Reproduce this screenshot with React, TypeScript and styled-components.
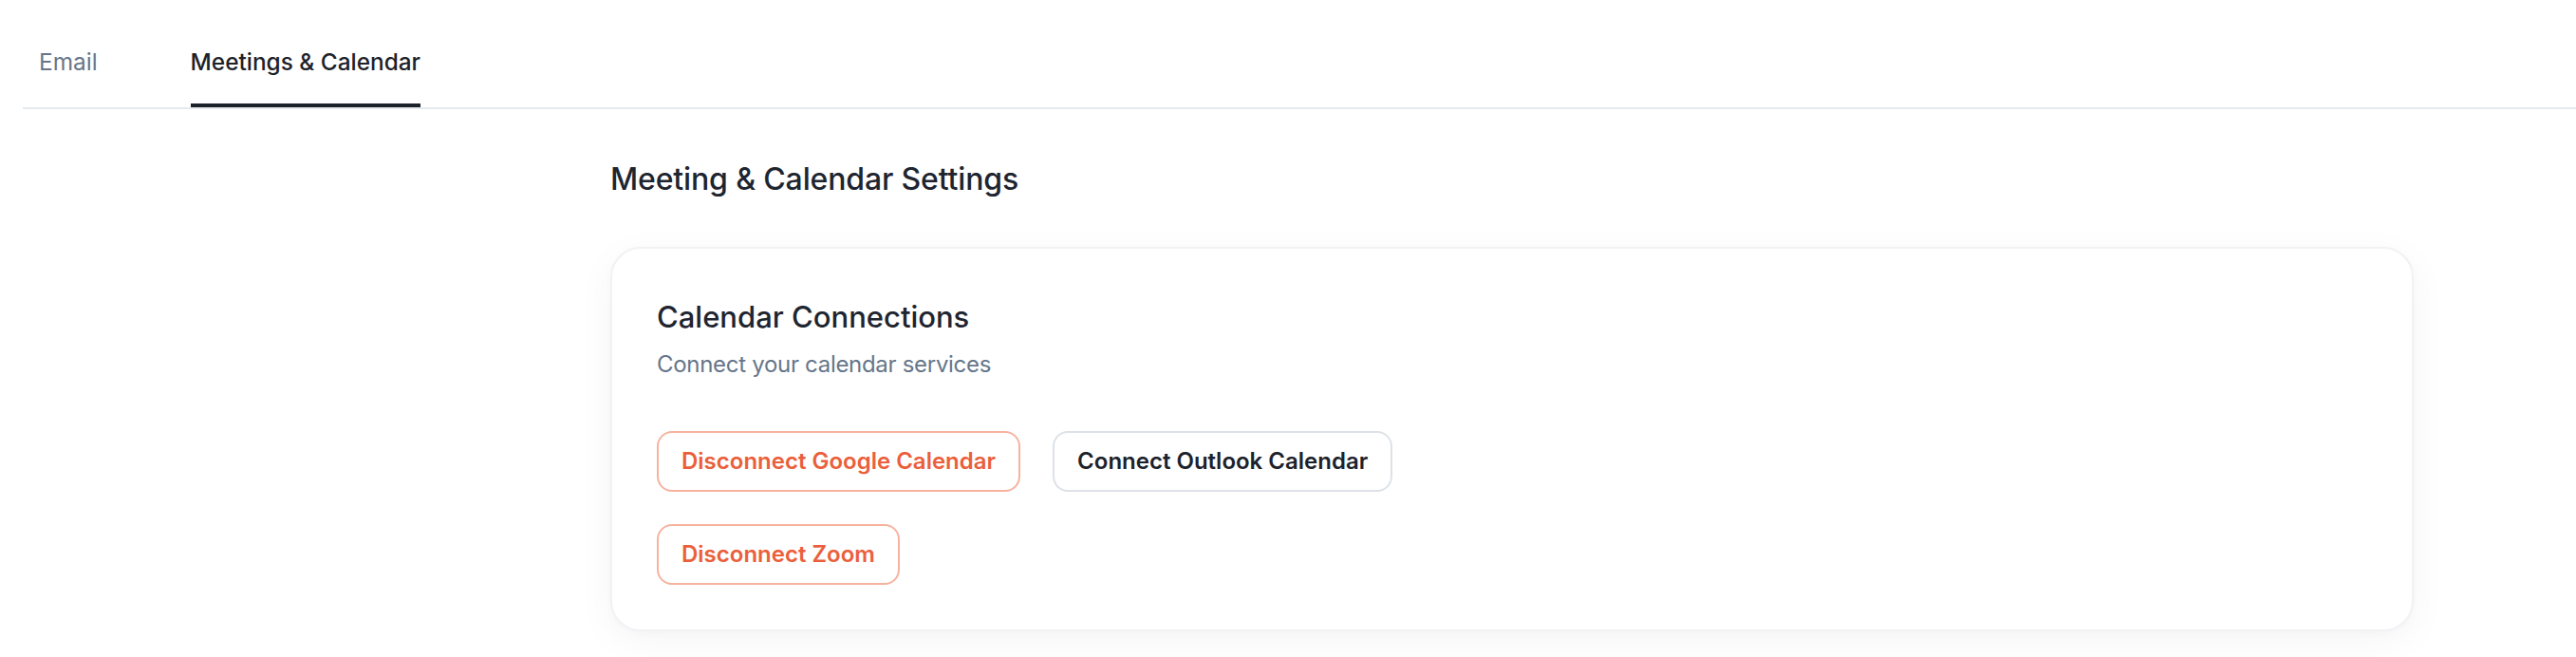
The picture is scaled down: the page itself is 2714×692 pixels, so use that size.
import React from "react";
import styled, { createGlobalStyle } from "styled-components";

const GlobalStyle = createGlobalStyle`
  html, body {
    margin: 0;
    padding: 0;
    background: #ffffff;
  }
  body {
    font-family: Inter, "Noto Sans", Roboto, sans-serif;
    color: #1e2430;
    -webkit-font-smoothing: antialiased;
  }
  * { box-sizing: border-box; }
`;

const Page = styled.div`
  padding: 24px 0 0 0;
  min-height: 692px;
`;

const TabList = styled.div`
  display: flex;
  gap: 98px;
  margin-left: 24px;
  padding-left: 17px;
  border-bottom: 2px solid #e6eaef;
`;

const Tab = styled.button<{ $active?: boolean }>`
  appearance: none;
  background: none;
  border: none;
  border-bottom: 4px solid ${(p) => (p.$active ? "#1d222a" : "transparent")};
  padding: 23px 0 26px;
  margin: 0;
  font-family: inherit;
  font-size: 24.4px;
  line-height: 36px;
  font-weight: ${(p) => (p.$active ? 500 : 400)};
  color: ${(p) => (p.$active ? "#1d222a" : "#68768a")};
  cursor: pointer;
`;

const Content = styled.main`
  margin-left: 643px;
  width: 1900px;
  padding-top: 52px;
`;

const PageTitle = styled.h1`
  margin: 0 0 49px;
  font-size: 32px;
  line-height: 44px;
  font-weight: 500;
  color: #1e2530;
  letter-spacing: -0.15px;
`;

const Card = styled.section`
  background: #ffffff;
  border: 2px solid #f1f2f4;
  border-radius: 32px;
  padding: 52px 47px 47px;
  box-shadow: 0 10px 40px rgba(15, 23, 42, 0.045), 0 2px 8px rgba(15, 23, 42, 0.02);
`;

const CardTitle = styled.h2`
  margin: 0;
  font-size: 31px;
  line-height: 40px;
  font-weight: 500;
  color: #1e2530;
`;

const CardSubtitle = styled.p`
  margin: 11px 0 0;
  font-size: 24px;
  line-height: 38px;
  font-weight: 400;
  letter-spacing: -0.3px;
  color: #66768a;
`;

const ButtonGroup = styled.div`
  display: flex;
  flex-direction: column;
  align-items: flex-start;
  gap: 34px;
  margin-top: 51px;
`;

const ButtonRow = styled.div`
  display: flex;
  gap: 34px;
`;

const ActionButton = styled.button<{ $variant: "danger" | "neutral" }>`
  appearance: none;
  height: 64px;
  padding: 0 24px;
  border-radius: 16px;
  background: #ffffff;
  border: 2px solid ${(p) => (p.$variant === "danger" ? "#f6b3a0" : "#dde2e8")};
  color: ${(p) => (p.$variant === "danger" ? "#ea5f3c" : "#1c222c")};
  font-family: inherit;
  font-size: 24px;
  line-height: 60px;
  font-weight: 600;
  white-space: nowrap;
  cursor: pointer;
`;

export default function App() {
  return (
    <>
      <GlobalStyle />
      <Page>
        <TabList>
          <Tab>Email</Tab>
          <Tab $active>Meetings &amp; Calendar</Tab>
        </TabList>
        <Content>
          <PageTitle>Meeting &amp; Calendar Settings</PageTitle>
          <Card>
            <CardTitle>Calendar Connections</CardTitle>
            <CardSubtitle>Connect your calendar services</CardSubtitle>
            <ButtonGroup>
              <ButtonRow>
                <ActionButton $variant="danger">Disconnect Google Calendar</ActionButton>
                <ActionButton $variant="neutral">Connect Outlook Calendar</ActionButton>
              </ButtonRow>
              <ButtonRow>
                <ActionButton $variant="danger">Disconnect Zoom</ActionButton>
              </ButtonRow>
            </ButtonGroup>
          </Card>
        </Content>
      </Page>
    </>
  );
}
